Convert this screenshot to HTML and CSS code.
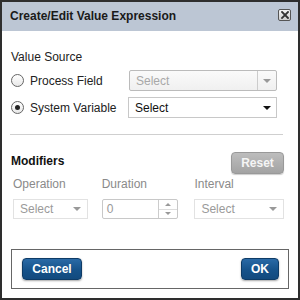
FILE: index.html
```html
<!DOCTYPE html>
<html>
<head>
<meta charset="utf-8">
<link rel="stylesheet" href="styles.css">
</head>
<body>
<div class="dialog">
  <div class="header">
    <span class="title">Create/Edit Value Expression</span>
    <span class="close">
      <svg width="8" height="8" viewBox="0 0 8 8"><path d="M1 1L7 7M7 1L1 7" stroke="#333" stroke-width="1.8" stroke-linecap="square"/></svg>
    </span>
  </div>
  <div class="content">
    <div class="label">Value Source</div>
    <div class="row">
      <span class="radio"></span>
      <span class="rlabel">Process Field</span>
      <span class="select disabled"><span class="stext">Select</span><span class="sarrow sep"><i class="tri gray"></i></span></span>
    </div>
    <div class="row row2">
      <span class="radio checked"></span>
      <span class="rlabel">System Variable</span>
      <span class="select active"><span class="stext">Select</span><span class="sarrow"><i class="tri"></i></span></span>
    </div>
    <div class="hr"></div>
    <div class="modhead">
      <span class="bold">Modifiers</span>
      <span class="btn reset">Reset</span>
    </div>
    <div class="mods">
      <div class="col c1">
        <div class="mlabel">Operation</div>
        <span class="mselect"><span class="stext">Select</span><i class="tri gray"></i></span>
      </div>
      <div class="col c2">
        <div class="mlabel">Duration</div>
        <span class="spin"><span class="stext dark">0</span><span class="spinbtns"><span class="sb"><i class="tri up"></i></span><span class="sb"><i class="tri gray small"></i></span></span></span>
      </div>
      <div class="col c3">
        <div class="mlabel">Interval</div>
        <span class="mselect"><span class="stext">Select</span><i class="tri gray"></i></span>
      </div>
    </div>
  </div>
  <div class="footer">
    <span class="btn blue cancel">Cancel</span>
    <span class="btn blue ok">OK</span>
  </div>
</div>
</body>
</html>
```
FILE: styles.css
```css
html, body { margin: 0; padding: 0; background: #fff; }
body { font-family: "Liberation Sans", Arial, sans-serif; font-size: 12px; color: #222; }
.dialog {
  width: 300px; height: 300px; box-sizing: border-box;
  border: 2px solid #2e2e2e; display: flex; flex-direction: column; background: #fff;
}
.header {
  height: 29px; background: #bcc6d4; display: flex; align-items: center;
  justify-content: space-between; padding: 0 7px 0 8px; box-sizing: border-box;
}
.title { font-weight: bold; font-size: 12px; color: #1a1a1a; margin-top: -2px; }
.close {
  width: 11px; height: 10px; border: 1px solid #555; border-radius: 2px;
  background: linear-gradient(#f4f4f4, #cfcfcf); display: flex; align-items: center; justify-content: center;
  margin-top: -4px;
}
.content { padding: 19px 14px 0 9px; }
.label { line-height: 14px; color: #222; }
.row { display: flex; align-items: center; height: 21px; margin-top: 6px; }
.row2 { margin-top: 6px; }
.radio {
  width: 11px; height: 11px; border: 1px solid #666; border-radius: 50%; box-sizing: content-box;
  background: linear-gradient(#fff, #e8e8e8); display: flex; align-items: center; justify-content: center; flex: none;
}
.radio.checked::after { content: ""; width: 5px; height: 5px; border-radius: 50%; background: #222; }
.rlabel { margin-left: 6px; width: 99px; font-size: 12px; color: #222; }
.select {
  display: flex; align-items: center; height: 21px; box-sizing: border-box; width: 149px;
  border: 1px solid #c8c8c8; background: #fff;
}
.select.disabled { border-color: #bbb; border-radius: 2px; background: linear-gradient(#fafafa, #f0f0f0); width: 148px; }
.select.disabled .stext { color: #a8a8a8; }
.row2 .select { margin-left: -1px; }
.stext { flex: 1; padding-left: 6px; color: #999; }
.select.active .stext { color: #111; }
.sarrow { width: 18px; height: 100%; display: flex; align-items: center; justify-content: center; }
.sarrow.sep { border-left: 1px solid #ccc; }
.tri { display: block; width: 0; height: 0; border-left: 4px solid transparent; border-right: 4px solid transparent; border-top: 4px solid #111; }
.tri.gray { border-top-color: #999; }
.tri.small { border-left-width: 3px; border-right-width: 3px; border-top-width: 3px; }
.tri.up { border-top: 0; border-bottom: 3px solid #999; border-left-width: 3px; border-right-width: 3px; }
.hr { height: 1px; background: #cfcfcf; margin: 16px 1px 0 -1px; }
.modhead { display: flex; justify-content: space-between; align-items: center; margin-top: 16px; height: 23px; }
.bold { font-weight: bold; color: #111; margin-top: -4px; }
.btn {
  display: inline-flex; align-items: center; justify-content: center; font-weight: bold; color: #fff;
  border-radius: 4px; box-sizing: border-box; height: 22px;
}
.reset {
  width: 53px; background: linear-gradient(#bdbdbd, #a3a3a3); border: 1px solid #999;
  box-shadow: 0 1px 1px rgba(0,0,0,0.2); color: #f5f5f5;
}
.mods { display: flex; margin-top: 3px; }
.mlabel { line-height: 14px; color: #8a8a8a; font-size: 12px; height: 14px; margin-bottom: 8px; }
.c1 { width: 75px; margin-left: 2px; }
.c2 { width: 77px; margin-left: 14px; }
.c3 { width: 90px; margin-left: 16px; }
.mselect {
  display: flex; align-items: center; height: 20px; box-sizing: border-box; border: 1px solid #e2e2e2;
  padding-right: 6px;
}
.mselect .stext { color: #9a9a9a; }
.spin { display: flex; height: 20px; box-sizing: border-box; border: 1px solid #c8c8c8; border-radius: 2px; align-items: stretch; }
.spin .stext { display: flex; align-items: center; padding-left: 4px; color: #999; }
.spinbtns { width: 18px; border-left: 1px solid #ccc; display: flex; flex-direction: column; }
.sb { flex: 1; display: flex; align-items: center; justify-content: center; }
.sb + .sb { border-top: 1px solid #ddd; }
.footer {
  margin: auto 9px 9px 9px; height: 40px; box-sizing: border-box; border: 1px solid #666;
  display: flex; align-items: center; justify-content: space-between; padding: 0 9px 0 10px;
}
.blue {
  background: linear-gradient(#2a6aa6, #16528a 55%, #124a7e); border: 1px solid #0e3b66;
  box-shadow: 0 1px 2px rgba(0,0,0,0.35);
}
.cancel { width: 60px; }
.ok { width: 38px; }
```
